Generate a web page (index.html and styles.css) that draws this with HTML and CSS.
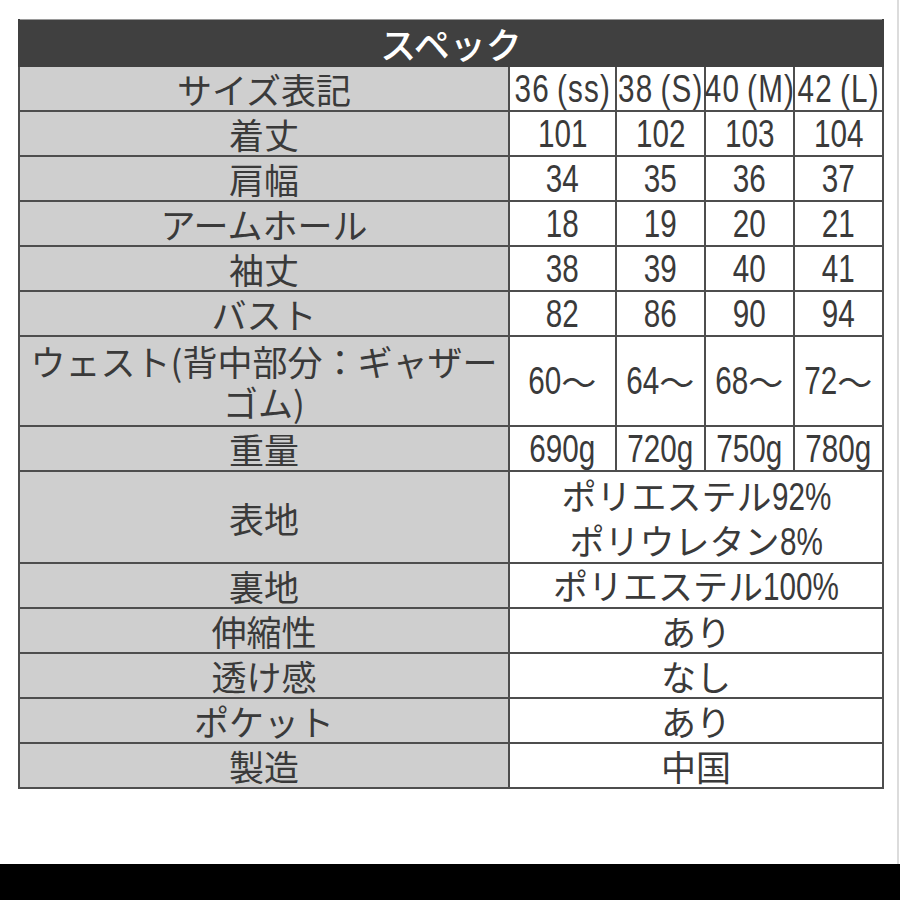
FILE: index.html
```html
<!DOCTYPE html>
<html lang="ja">
<head>
<meta charset="utf-8">
<link rel="stylesheet" href="styles.css">
</head>
<body>
<div class="page">
  <div class="sheet">
    <table class="spec">
      <colgroup>
        <col class="c-label"><col class="c-a"><col class="c-b"><col class="c-b"><col class="c-b">
      </colgroup>
      <thead>
        <tr><th colspan="5" class="title">スペック</th></tr>
      </thead>
      <tbody>
        <tr class="sizes"><th>サイズ表記</th><td><span class="n">36 (ss)</span></td><td><span class="n">38 (S)</span></td><td><span class="n">40 (M)</span></td><td><span class="n">42 (L)</span></td></tr>
        <tr><th>着丈</th><td><span class="n">101</span></td><td><span class="n">102</span></td><td><span class="n">103</span></td><td><span class="n">104</span></td></tr>
        <tr><th>肩幅</th><td><span class="n">34</span></td><td><span class="n">35</span></td><td><span class="n">36</span></td><td><span class="n">37</span></td></tr>
        <tr><th>アームホール</th><td><span class="n">18</span></td><td><span class="n">19</span></td><td><span class="n">20</span></td><td><span class="n">21</span></td></tr>
        <tr><th>袖丈</th><td><span class="n">38</span></td><td><span class="n">39</span></td><td><span class="n">40</span></td><td><span class="n">41</span></td></tr>
        <tr><th>バスト</th><td><span class="n">82</span></td><td><span class="n">86</span></td><td><span class="n">90</span></td><td><span class="n">94</span></td></tr>
        <tr class="tall"><th>ウェスト(背中部分：ギャザー<br>ゴム)</th><td><span class="n2">60</span>〜</td><td><span class="n2">64</span>〜</td><td><span class="n2">68</span>〜</td><td><span class="n2">72</span>〜</td></tr>
        <tr><th>重量</th><td><span class="n">690g</span></td><td><span class="n">720g</span></td><td><span class="n">750g</span></td><td><span class="n">780g</span></td></tr>
        <tr class="tall"><th>表地</th><td colspan="4" class="mix">ポリエステル<span class="p p3">92%</span><br>ポリウレタン<span class="p p2">8%</span></td></tr>
        <tr><th>裏地</th><td colspan="4" class="mix">ポリエステル<span class="p p4">100%</span></td></tr>
        <tr><th>伸縮性</th><td colspan="4" class="mix">あり</td></tr>
        <tr><th>透け感</th><td colspan="4" class="mix">なし</td></tr>
        <tr><th>ポケット</th><td colspan="4" class="mix">あり</td></tr>
        <tr><th>製造</th><td colspan="4" class="mix">中国</td></tr>
      </tbody>
    </table>
  </div>
  <div class="footer"></div>
</div>
</body>
</html>
```

FILE: styles.css
```css
html, body {
  margin: 0;
  padding: 0;
  background: #ffffff;
}
.page {
  width: 900px;
  height: 900px;
  display: flex;
  flex-direction: column;
}
.sheet {
  flex: 1;
  border-right: 2px solid #dcdcdc;
  margin-right: 1px;
  padding: 19px 0 0 18px;
}
.spec {
  border-collapse: collapse;
  width: 864px;
  table-layout: fixed;
  font-family: "Noto Sans CJK JP", sans-serif;
  color: #3a3a3a;
  font-size: 35px;
}
.c-label { width: 490px; }
.c-a { width: 107px; }
.c-b { width: 89px; }
.spec th, .spec td {
  border: 2px solid #4e4e4e;
  padding: 0;
  text-align: center;
  vertical-align: middle;
  height: 43px;
  line-height: 36px;
  font-weight: 400;
  white-space: nowrap;
  overflow: visible;
}
.spec th.title {
  background: #404040;
  color: #ffffff;
  height: 45px;
  font-size: 36px;
  font-weight: 500;
  border-color: #404040;
  border-top: 1px solid #9a9a9a;
}
.spec tbody th {
  background: #cfcfcf;
}
.spec td {
  background: #ffffff;
}
.spec tr.tall th, .spec tr.tall td {
  height: 88px;
}
.spec tr.tall th { line-height: 41px; }
.spec td.mix { line-height: 36px; }
.spec tr.tall td.mix { line-height: 45px; }
.n, .n2, .p {
  display: inline-block;
  font-family: "Liberation Sans", sans-serif;
  font-size: 38px;
  line-height: 34px;
  transform: scaleX(0.78);
  vertical-align: top;
  margin-top: 1px;
}
.n {
  margin-left: -14px;
  margin-right: -14px;
}
.n2 {
  transform-origin: 100% 50%;
  margin-left: -10px;
}
.sizes .n {
  transform: scaleX(0.78);
  letter-spacing: 1.5px;
  word-spacing: -3px;
  margin-left: -16px;
  margin-right: -16px;
}
.p {
  transform-origin: 0 50%;
  vertical-align: baseline;
  margin-top: 0;
}
.p2 { margin-right: -12px; }
.p3 { margin-right: -17px; }
.p4 { margin-right: -21px; }
.footer {
  height: 36px;
  background: #000000;
}
```
